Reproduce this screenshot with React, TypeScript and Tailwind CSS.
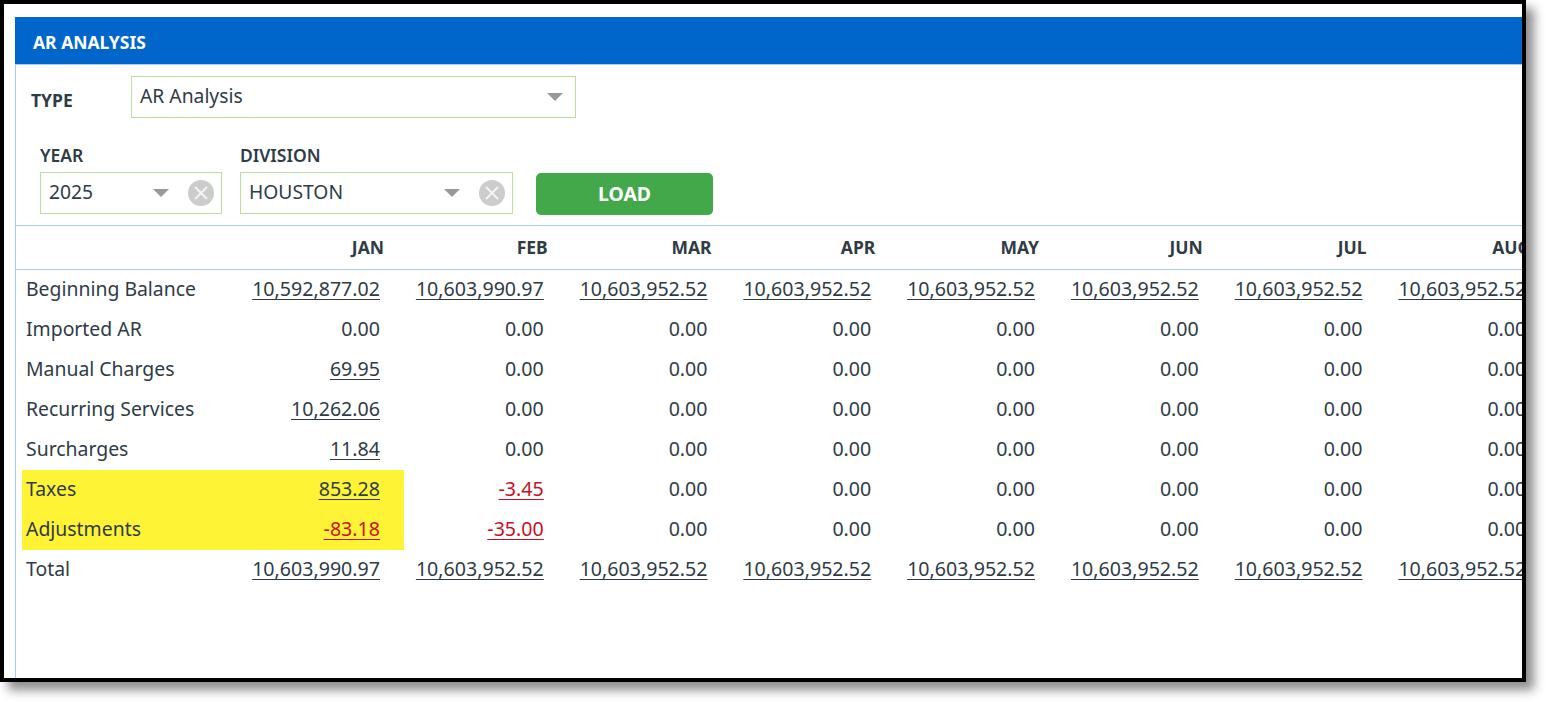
const months = ['JAN', 'FEB', 'MAR', 'APR', 'MAY', 'JUN', 'JUL', 'AUG']

const rest = '10,603,952.52'
const zeros = ['0.00', '0.00', '0.00', '0.00', '0.00', '0.00']

const rows = [
  { label: 'Beginning Balance', values: ['10,592,877.02', '10,603,990.97', rest, rest, rest, rest, rest, rest], links: true },
  { label: 'Imported AR', values: ['0.00', '0.00', ...zeros] },
  { label: 'Manual Charges', values: ['69.95', '0.00', ...zeros] },
  { label: 'Recurring Services', values: ['10,262.06', '0.00', ...zeros] },
  { label: 'Surcharges', values: ['11.84', '0.00', ...zeros] },
  { label: 'Taxes', values: ['853.28', '-3.45', ...zeros], highlight: true },
  { label: 'Adjustments', values: ['-83.18', '-35.00', ...zeros], highlight: true },
  { label: 'Total', values: ['10,603,990.97', rest, rest, rest, rest, rest, rest, rest], links: true },
]

function Caret() {
  return (
    <svg width="16" height="8" viewBox="0 0 16 8" className="shrink-0">
      <path d="M0 0H16L8 8Z" fill="#999999" />
    </svg>
  )
}

function ClearIcon() {
  return (
    <svg width="26" height="26" viewBox="0 0 26 26" className="shrink-0">
      <circle cx="13" cy="13" r="13" fill="#cccccc" />
      <path d="M7 7L19 19M19 7L7 19" stroke="#f4f4f4" strokeWidth="2" />
    </svg>
  )
}

function Field({ value, width, clear }: { value: string; width: string; clear?: boolean }) {
  return (
    <div className={`flex h-[42px] items-center border border-[#b9e09c] pl-2 text-[19.3px] ${clear ? 'pr-[7px]' : 'pr-3'} ${width}`}>
      <span className="flex-1 pb-[2px]">{value}</span>
      <Caret />
      {clear && <div className="ml-[19px]"><ClearIcon /></div>}
    </div>
  )
}

function Amount({ value, link }: { value: string; link: boolean }) {
  return (
    <span className={`whitespace-nowrap ${link ? 'underline underline-offset-[3px]' : ''} ${value.startsWith('-') ? 'text-[#c8101e]' : ''}`}>
      {value}
    </span>
  )
}

export default function App() {
  return (
    <div className="h-[702px] w-[1546px] overflow-hidden bg-white font-['Noto_Sans',sans-serif] text-[#2f3b45]">
      <div className="flex h-[682px] w-[1526px] flex-col border-4 border-black pl-[11px] pt-[13px] shadow-[8px_8px_10px_rgba(0,0,0,0.45)]">
        <div className="flex h-[47px] shrink-0 items-center bg-[#0066cc] pl-[18px] pt-1 text-[17.5px] font-bold text-white">
          AR ANALYSIS
        </div>
        <div className="flex min-h-0 flex-1 flex-col overflow-hidden border-l border-t border-[#a9caf2]">
          {/* Filters */}
          <div className="flex h-[161px] shrink-0 flex-col border-b border-[#a9caf2]">
            <div className="mt-[11px] flex items-center">
              <span className="ml-[15px] mt-[6px] w-[100px] text-[17.5px] font-bold">TYPE</span>
              <Field value="AR Analysis" width="w-[445px]" />
            </div>
            <div className="ml-6 mt-[27px] flex items-end">
              <div className="w-[200px]">
                <div className="mb-[6px] text-[17.5px] font-semibold leading-[21px]">YEAR</div>
                <Field value="2025" width="w-[182px]" clear />
              </div>
              <div>
                <div className="mb-[6px] text-[17.5px] font-semibold leading-[21px]">DIVISION</div>
                <Field value="HOUSTON" width="w-[273px]" clear />
              </div>
              <button className="relative top-px ml-[23px] h-[42px] w-[177px] rounded-[5px] bg-[#43a84a] text-[19.4px] font-bold text-white">
                LOAD
              </button>
            </div>
          </div>
          {/* Table */}
          <div className="grid h-[44px] shrink-0 grid-cols-[388px_repeat(8,163.75px)] items-center border-b border-[#a9caf2] text-[17.5px] font-bold">
            {months.map((m) => (
              <div key={m} className="whitespace-nowrap pr-5 text-right">{m}</div>
            ))}
          </div>
          <div className="pl-[6px] text-[19.6px]">
            {rows.map((row) => (
              <div key={row.label} className="grid h-10 grid-cols-[382px_repeat(7,163.75px)]">
                <div className={`flex items-center justify-between pb-[2px] pl-1 pr-6 ${row.highlight ? 'bg-[#fff336]' : ''}`}>
                  <span className="text-[19.4px]">{row.label}</span>
                  <Amount value={row.values[0]} link={row.values[0] !== '0.00'} />
                </div>
                {row.values.slice(1).map((v, i) => (
                  <div key={i} className="flex items-center justify-end pb-[2px] pr-6">
                    <Amount value={v} link={v !== '0.00'} />
                  </div>
                ))}
              </div>
            ))}
          </div>
        </div>
      </div>
    </div>
  )
}
